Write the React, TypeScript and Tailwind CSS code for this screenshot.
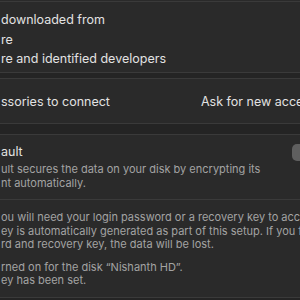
import React from 'react';

// Security settings pane (dark), cropped view
const Card: React.FC<{ children: React.ReactNode; className?: string }> = ({ children, className = '' }) => (
    <div className={`bg-[#2a2a2a] border-y border-[#3a3a3a] ${className}`}>{children}</div>
);

const Switch: React.FC = () => (
    <div className="ml-auto -mr-[18px] w-[26px] h-[17px] rounded-[5px] bg-[#5f5f5f] shrink-0" />
);

export default function App() {
    return (
        <div className="w-[300px] h-[300px] overflow-hidden bg-[#242424] font-['Inter','Liberation_Sans',sans-serif] whitespace-nowrap">
            {/* gatekeeper section (continues from above) */}
            <div className="bg-[#2a2a2a] h-px" />
            <div className="bg-[#2a2a2a] border-t border-b border-[#3a3a3a] pt-[8px] pb-[4px] text-[12.5px] text-[#e2e2e2]">
                <div className="h-[20px] leading-[20px] pl-px">downloaded from</div>
                <div className="h-[20px] leading-[20px] pl-px">re</div>
                <div className="h-[18px] leading-[18px] pl-px">re and identified developers</div>
            </div>

            <div className="h-[5px]" />

            <Card className="pt-[13px] pb-[11px]">
                <div className="flex h-[20px] items-center text-[12.5px] text-[#e2e2e2] overflow-hidden">
                    <span className="w-[201px] shrink-0 pl-px">ssories to connect</span>
                    <span className="shrink-0">Ask for new accessories</span>
                </div>
            </Card>

            <div className="h-[10px]" />

            <Card className="pt-[7px]">
                <div className="flex items-center h-[20px] text-[12.5px] text-[#e2e2e2] pl-px">
                    <span>ault</span>
                    <Switch />
                </div>
                <div className="text-[11px] leading-[14px] text-[#a3a3a3] pl-px">
                    <div>ult secures the data on your disk by encrypting its</div>
                    <div>nt automatically.</div>
                </div>
                <div className="h-[9px]" />
                <div className="h-px bg-[#3a3a3a]" />
                <div className="pt-[11px] pb-[9px] text-[11px] leading-[13.5px] text-[#a3a3a3] pl-px">
                    <div>ou will need your login password or a recovery key to access</div>
                    <div>ey is automatically generated as part of this setup. If you forget</div>
                    <div>rd and recovery key, the data will be lost.</div>
                    <div className="mt-[9px]">rned on for the disk “Nishanth HD”.</div>
                    <div>ey has been set.</div>
                </div>
            </Card>
        </div>
    );
}
